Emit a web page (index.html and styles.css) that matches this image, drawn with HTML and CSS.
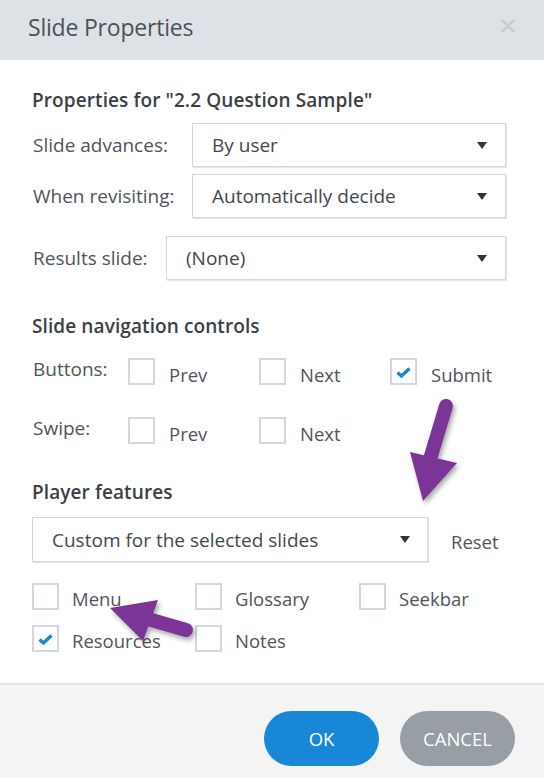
FILE: index.html
```html
<!DOCTYPE html>
<html>
<head>
<meta charset="utf-8">
<link rel="stylesheet" href="styles.css">
</head>
<body>
<div class="dialog">
  <div class="header">
    <div class="title">Slide Properties</div>
    <svg class="close" width="14" height="14" viewBox="0 0 14 14"><path d="M2 2L12 12M12 2L2 12" stroke="#c9cdd0" stroke-width="3" stroke-linecap="round"/></svg>
  </div>
  <div class="body">
    <div class="heading h-props">Properties for "2.2 Question Sample"</div>
    <div class="row r1">
      <div class="label lw1">Slide advances:</div>
      <div class="select"><span>By user</span><i class="caret"></i></div>
    </div>
    <div class="row r2">
      <div class="label lw1">When revisiting:</div>
      <div class="select"><span>Automatically decide</span><i class="caret"></i></div>
    </div>
    <div class="row r3">
      <div class="label lw2">Results slide:</div>
      <div class="select"><span>(None)</span><i class="caret"></i></div>
    </div>

    <div class="heading h-nav">Slide navigation controls</div>
    <div class="navrow n1">
      <div class="label navlabel">Buttons:</div>
      <div class="check navcol"><span class="box"></span><span class="ctext">Prev</span></div>
      <div class="check navcol"><span class="box"></span><span class="ctext">Next</span></div>
      <div class="check navcol"><span class="box checked"><svg width="17" height="13" viewBox="0 0 17 13"><path d="M2.5 6.5L6.5 10L14.5 2.5" fill="none" stroke="#1a86d6" stroke-width="3.4"/></svg></span><span class="ctext">Submit</span></div>
    </div>
    <div class="navrow n2">
      <div class="label navlabel">Swipe:</div>
      <div class="check navcol"><span class="box"></span><span class="ctext">Prev</span></div>
      <div class="check navcol"><span class="box"></span><span class="ctext">Next</span></div>
    </div>

    <div class="heading h-player">Player features</div>
    <div class="player-row">
      <div class="select wide"><span>Custom for the selected slides</span><i class="caret"></i></div>
      <div class="reset">Reset</div>
    </div>
    <div class="features">
      <div class="check"><span class="box"></span><span class="ctext">Menu</span></div>
      <div class="check"><span class="box"></span><span class="ctext">Glossary</span></div>
      <div class="check"><span class="box"></span><span class="ctext">Seekbar</span></div>
      <div class="check"><span class="box checked"><svg width="17" height="13" viewBox="0 0 17 13"><path d="M2.5 6.5L6.5 10L14.5 2.5" fill="none" stroke="#1a86d6" stroke-width="3.4"/></svg></span><span class="ctext">Resources</span></div>
      <div class="check"><span class="box"></span><span class="ctext">Notes</span></div>
    </div>
  </div>
  <div class="footer">
    <button class="btn ok">OK</button>
    <button class="btn cancel">CANCEL</button>
  </div>
  <svg class="arrows" width="544" height="778" viewBox="0 0 544 778">
    <defs>
      <filter id="sh" x="-50%" y="-50%" width="200%" height="200%">
        <feDropShadow dx="2" dy="3" stdDeviation="2.5" flood-color="#000" flood-opacity="0.35"/>
      </filter>
    </defs>
    <g filter="url(#sh)" fill="#7a3597">
      <path d="M446 406L428 466" stroke="#7a3597" stroke-width="14" stroke-linecap="round"/>
      <polygon points="410,452 457,463 423,501"/>
      <path d="M186 630L148 619" stroke="#7a3597" stroke-width="14" stroke-linecap="round"/>
      <polygon points="110,608 158,600 143,641"/>
    </g>
  </svg>
</div>
</body>
</html>
```

FILE: styles.css
```css
* { box-sizing: border-box; }
html, body { margin: 0; padding: 0; background: #fff; }
body {
  font-family: "Open Sans", "Noto Sans", sans-serif;
  color: #4a4f54;
}
.dialog {
  position: relative;
  width: 544px;
  height: 778px;
  display: flex;
  flex-direction: column;
  overflow: hidden;
}
.header {
  height: 60px;
  flex: none;
  background: #dde2e6;
  display: flex;
  align-items: center;
  justify-content: space-between;
  padding: 0 29px 0 28px;
}
.title {
  font-size: 23px;
  color: #4c5257;
  letter-spacing: -0.2px;
  margin-top: -7px;
}
.close { margin-top: -8px; }
.body {
  flex: 1;
  padding: 0 38px 0 32px;
}
.heading {
  font-weight: 600;
  font-size: 19px;
  color: #3b4045;
  line-height: 26px;
  letter-spacing: 0.1px;
}
.h-props { margin-top: 27px; }
.label {
  font-size: 19px;
  color: #50555a;
  flex: none;
}
.row {
  display: flex;
  align-items: center;
  height: 44px;
}
.r1 { margin-top: 10px; }
.r2 { margin-top: 7px; }
.r3 { margin-top: 18px; }
.lw1 { width: 160px; padding-left: 1px; }
.lw2 { width: 134px; padding-left: 1px; }
.select {
  flex: 1;
  height: 44px;
  border: 1px solid #d3d8dc;
  box-shadow: 1px 1px 1px #e3e6e9;
  display: flex;
  align-items: center;
  justify-content: space-between;
  padding: 0 18px 0 19px;
  font-size: 19px;
  color: #43484d;
  background: #fff;
}
.caret {
  width: 0;
  height: 0;
  border-left: 5.5px solid transparent;
  border-right: 5.5px solid transparent;
  border-top: 7px solid #333;
}
.h-nav { margin-top: 33px; }
.navrow {
  display: flex;
  align-items: center;
  height: 27px;
}
.n1 { margin-top: 19px; }
.n2 { margin-top: 32px; }
.navlabel { width: 96px; padding-left: 1px; margin-top: -6px; flex: none; }
.navcol { width: 131px; flex: none; }
.check {
  display: flex;
  align-items: center;
  gap: 14px;
}
.box {
  width: 27px;
  height: 27px;
  border: 2px solid #d2d8dd;
  background: #fff;
  flex: none;
  display: flex;
  align-items: center;
  justify-content: center;
}
.box svg { margin-top: 1px; }
.ctext {
  font-size: 18.5px;
  color: #50555a;
  margin-top: 5px;
  white-space: nowrap;
}
.h-player { margin-top: 35px; }
.player-row {
  display: flex;
  align-items: center;
  margin-top: 12px;
  height: 45px;
}
.select.wide {
  flex: none;
  width: 396px;
  height: 45px;
  padding: 0 17px 0 19px;
}
.reset {
  margin-left: 23px;
  font-size: 18.5px;
  color: #50555a;
  margin-top: 3px;
}
.features {
  display: grid;
  grid-template-columns: 163px 164px auto;
  grid-auto-rows: 27px;
  row-gap: 15px;
  margin-top: 21px;
}
.features .check { gap: 13px; height: 27px; }
.features .ctext { margin-top: 4px; }
.footer {
  flex: none;
  height: 95px;
  border-top: 2px solid #e2e6ea;
  background: #f4f4f4;
  display: flex;
  justify-content: flex-end;
  align-items: flex-start;
  padding: 26px 29px 0 0;
  gap: 21px;
}
.btn {
  width: 115px;
  height: 55px;
  border: none;
  border-radius: 28px;
  color: #fff;
  font-family: "Open Sans", "Noto Sans", sans-serif;
  font-size: 18.5px;
  padding: 0;
}
.ok { background: #1887d8; }
.cancel { background: #979ea4; }
.arrows {
  position: absolute;
  left: 0;
  top: 0;
  pointer-events: none;
}
```
